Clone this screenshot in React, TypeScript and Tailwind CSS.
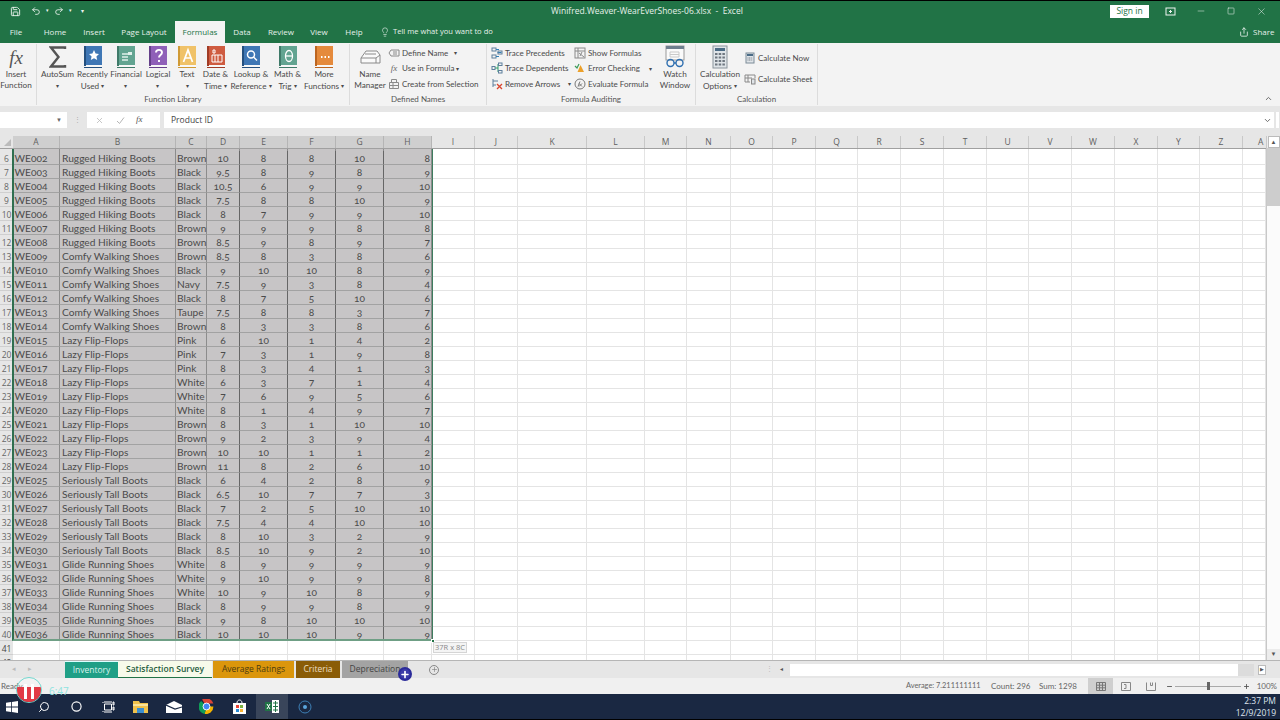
import type { ReactNode } from "react";
import { ChevronDown, ChevronUp, Circle, Lightbulb, Minus, Plus, Redo2, Save, Search, Share, Square, Undo2, X } from "lucide-react";

const cols = "grid grid-cols-[13px_47px_116px_31px_33px_48px_48px_48px_48px_43px_43px_69px_58px_42px_44px_42px_43px_42px_43px_43px_43px_42px_43px_43px_43px_42px_43px_23px]";
const letters = ["A", "B", "C", "D", "E", "F", "G", "H", "I", "J", "K", "L", "M", "N", "O", "P", "Q", "R", "S", "T", "U", "V", "W", "X", "Y", "Z", "A"];
const blanks = Array.from({ length: 19 }, (_, i) => i);

const P = "Rugged Hiking Boots";
const Q = "Comfy Walking Shoes";
const L = "Lazy Flip-Flops";
const S = "Seriously Tall Boots";
const G = "Glide Running Shoes";

const rows: [string, string, string, string, string, string, string, string][] = [
  ["WE002", P, "Brown", "10", "8", "8", "10", "8"],
  ["WE003", P, "Black", "9.5", "8", "9", "8", "9"],
  ["WE004", P, "Black", "10.5", "6", "9", "9", "10"],
  ["WE005", P, "Black", "7.5", "8", "8", "10", "9"],
  ["WE006", P, "Black", "8", "7", "9", "9", "10"],
  ["WE007", P, "Brown", "9", "9", "9", "8", "8"],
  ["WE008", P, "Brown", "8.5", "9", "8", "9", "7"],
  ["WE009", Q, "Brown", "8.5", "8", "3", "8", "6"],
  ["WE010", Q, "Black", "9", "10", "10", "8", "9"],
  ["WE011", Q, "Navy", "7.5", "9", "3", "8", "4"],
  ["WE012", Q, "Black", "8", "7", "5", "10", "6"],
  ["WE013", Q, "Taupe", "7.5", "8", "8", "3", "7"],
  ["WE014", Q, "Brown", "8", "3", "3", "8", "6"],
  ["WE015", L, "Pink", "6", "10", "1", "4", "2"],
  ["WE016", L, "Pink", "7", "3", "1", "9", "8"],
  ["WE017", L, "Pink", "8", "3", "4", "1", "3"],
  ["WE018", L, "White", "6", "3", "7", "1", "4"],
  ["WE019", L, "White", "7", "6", "9", "5", "6"],
  ["WE020", L, "White", "8", "1", "4", "9", "7"],
  ["WE021", L, "Brown", "8", "3", "1", "10", "10"],
  ["WE022", L, "Brown", "9", "2", "3", "9", "4"],
  ["WE023", L, "Brown", "10", "10", "1", "1", "2"],
  ["WE024", L, "Brown", "11", "8", "2", "6", "10"],
  ["WE025", S, "Black", "6", "4", "2", "8", "9"],
  ["WE026", S, "Black", "6.5", "10", "7", "7", "3"],
  ["WE027", S, "Black", "7", "2", "5", "10", "10"],
  ["WE028", S, "Black", "7.5", "4", "4", "10", "10"],
  ["WE029", S, "Black", "8", "10", "3", "2", "9"],
  ["WE030", S, "Black", "8.5", "10", "9", "2", "10"],
  ["WE031", G, "White", "8", "9", "9", "9", "9"],
  ["WE032", G, "White", "9", "10", "9", "9", "8"],
  ["WE033", G, "White", "10", "9", "10", "8", "9"],
  ["WE034", G, "Black", "8", "9", "9", "8", "9"],
  ["WE035", G, "Black", "9", "8", "10", "10", "10"],
  ["WE036", G, "Black", "10", "10", "10", "9", "9"],
];

const cell = "bg-[#c7c5c6] border-r border-b border-r-[#8c8c8c] border-b-[#a2a2a2] whitespace-nowrap";
const numCell = "bg-[#c7c5c6] border-r border-b border-r-[#666] border-b-[#a2a2a2] text-center oldstyle-nums";

function Book({ color, spine, children }: { color: string; spine: string; children?: ReactNode }) {
  return (
    <svg width="24" height="24" viewBox="0 0 24 24">
      <rect x="3" y="1" width="18" height="20" fill={color} />
      <rect x="3" y="1" width="2" height="20" fill={spine} />
      <rect x="5" y="20" width="16" height="2" fill="#f8f8f8" />
      <rect x="3" y="22" width="18" height="1" fill={spine} />
      {children}
    </svg>
  );
}

function Big({ w, icon, lines, caret }: { w: string; icon: ReactNode; lines: string[]; caret?: boolean }) {
  return (
    <div className={`${w} flex flex-col items-center`}>
      <div className="h-[26px] flex items-center justify-center">{icon}</div>
      <div className="text-[8.2px] leading-[11px] -mt-[1px] text-[#4a4a4a] whitespace-nowrap text-center font-['Lato',sans-serif]">
        {lines.map((t, i) => (
          <div key={i}>
            {t}
            {caret && i === lines.length - 1 && <span className="ml-[2px] text-[6px] align-[1px]">▾</span>}
          </div>
        ))}
        {lines.length === 1 && caret === undefined && <div className="text-[6px]">▾</div>}
      </div>
    </div>
  );
}

function Small({ icon, label, caret }: { icon: ReactNode; label: string; caret?: string }) {
  return (
    <div className="h-[15.5px] flex items-center gap-[2px] text-[8px] text-[#4a4a4a] whitespace-nowrap font-['Lato',sans-serif]">
      <span className="w-[12px] h-[12px] flex items-center justify-center shrink-0">{icon}</span>
      <span>{label}</span>
      {caret !== undefined && <span className={`${caret} text-[6px]`}>▾</span>}
    </div>
  );
}

function Group({ w, label, children, row, labelCls }: { w: string; label: string; children: ReactNode; row?: string; labelCls?: string }) {
  return (
    <div className={`${w} h-[61px] mt-[1px] flex flex-col border-r border-[#dcdcdc]`}>
      <div className={`h-[50px] flex ${row ?? ""}`}>{children}</div>
      <div className={`h-[11px] leading-[10px] text-[8px] text-center text-[#555] whitespace-nowrap font-['Lato',sans-serif] ${labelCls ?? ""}`}>{label}</div>
    </div>
  );
}

const mini = { width: 12, height: 12, viewBox: "0 0 12 12", fill: "none" };

function TitleTab({ w, children, active }: { w: string; children: ReactNode; active?: boolean }) {
  return (
    <div className={`${w} h-full flex items-center justify-center text-[8px] ${active ? "bg-[#f3f3f3] text-[#217346]" : "text-[#e6f0ea]"}`}>
      {children}
    </div>
  );
}

function SheetTab({ w, cls, children }: { w: string; cls: string; children: ReactNode }) {
  return <div className={`${w} h-[17px] flex items-center justify-center text-[8.5px] whitespace-nowrap ${cls}`}>{children}</div>;
}

function Task({ w = "w-[33px]", active, children }: { w?: string; active?: boolean; children: ReactNode }) {
  return <div className={`${w} h-full flex items-center justify-center ${active ? "bg-[#39455a]" : ""}`}>{children}</div>;
}

export default function App() {
  return (
    <div className="w-[1280px] h-[720px] overflow-hidden relative flex flex-col bg-[#e8e8e8] font-['Open_Sans',sans-serif] text-[#444]">
      {/* title bar */}
      <div className="h-[21px] shrink-0 bg-[#217346] border-t border-black flex items-center text-white">
        <div className="w-[551px] flex items-center pl-[10px] gap-[5px] text-[#eef5f0]">
          <Save size={11} strokeWidth={2} />
          <Undo2 size={10} className="ml-[5px]" />
          <span className="text-[5px]">▾</span>
          <Redo2 size={10} />
          <span className="text-[5px]">▾</span>
          <span className="text-[6px] ml-[4px]">▾</span>
        </div>
        <div className="w-[559px] text-[8.5px] text-[#e6f0ea] whitespace-nowrap">Winifred.Weaver-WearEverShoes-06.xlsx&nbsp; - &nbsp;Excel</div>
        <div className="w-[39px] h-[13px] bg-white text-[#217346] text-[8.5px] flex items-center justify-center">Sign in</div>
        <div className="flex-1 flex items-center text-[#f0f5f2]">
          <svg className="ml-[16px]" width="11" height="9" viewBox="0 0 11 9" fill="none" stroke="currentColor">
            <rect x="1" y="1" width="9" height="7" />
            <path d="M5.5 3v3M4 4.500h3" />
          </svg>
          <Minus className="ml-[20px]" size={10} strokeWidth={1.2} />
          <Square className="ml-[21px]" size={8} strokeWidth={1.6} />
          <X className="ml-[21px]" size={11} strokeWidth={1.1} />
        </div>
      </div>

      {/* ribbon tabs */}
      <div className="h-[22px] shrink-0 bg-[#217346] flex items-center">
        <TitleTab w="w-[32px]">File</TitleTab>
        <TitleTab w="w-[46px]">Home</TitleTab>
        <TitleTab w="w-[32px]">Insert</TitleTab>
        <TitleTab w="w-[65px] pl-[3px]">Page Layout</TitleTab>
        <TitleTab w="w-[50px]" active>Formulas</TitleTab>
        <TitleTab w="w-[34px]">Data</TitleTab>
        <TitleTab w="w-[44px]">Review</TitleTab>
        <TitleTab w="w-[32px]">View</TitleTab>
        <TitleTab w="w-[38px]">Help</TitleTab>
        <div className="flex items-center text-[7.6px] text-[#e6f0ea] whitespace-nowrap pl-[7px] gap-[3px] w-[866px]">
          <Lightbulb size={10} strokeWidth={1.5} />
          <span>Tell me what you want to do</span>
        </div>
        <div className="flex items-center gap-[4px] text-[8px] text-[#e6f0ea]">
          <Share size={10} />
          <span>Share</span>
        </div>
      </div>

      {/* ribbon */}
      <div className="h-[63px] shrink-0 bg-[#f3f3f3] flex relative">
        <Group w="w-[37px]" label="">
          <Big
            w="w-[32px]"
            lines={["Insert", "Function"]}
            caret={false}
            icon={<span className="font-['Liberation_Serif',serif] italic text-[19px] leading-none text-[#555]">fx</span>}
          />
        </Group>
        <Group w="w-[313px]" label="Function Library" row="pl-[3px]" labelCls="pr-[40px]">
          <Big
            w="w-[35px]"
            lines={["AutoSum"]}
            icon={
              <svg width="18" height="22" viewBox="0 0 18 22" fill="none" stroke="#555" strokeWidth="2.400">
                <path d="M16 3V1.500H2L9.500 11 2 20.500h14V19" />
              </svg>
            }
          />
          <Big w="w-[35px]" lines={["Recently", "Used"]} caret icon={<Book color="#3f77b5" spine="#24507f"><path d="M13 5l1.600 3.600 3.400.4-2.600 2.400.8 3.600-3.200-1.800-3.200 1.800.8-3.600L8 9l3.400-.4z" fill="#fff" /></Book>} />
          <Big w="w-[32px]" lines={["Financial"]} icon={<Book color="#62a491" spine="#3f7a69"><path d="M8 9h6M8 12h6M8 15h6" stroke="#dff0ea" strokeWidth="1.400" /><rect x="14" y="7" width="4" height="3" fill="#dff0ea" /></Book>} />
          <Big w="w-[32px]" lines={["Logical"]} icon={<Book color="#8f60b8" spine="#65408a"><path d="M10 7.500c0-3.500 6-3.500 6 0 0 2.500-3 2.500-3 5M13 15v2" stroke="#fff" strokeWidth="1.900" fill="none" /></Book>} />
          <Big w="w-[26px]" lines={["Text"]} icon={<Book color="#f0c268" spine="#d09a35"><path d="M8.500 17L13 5l4.500 12M10 13h6" stroke="#fff" strokeWidth="1.700" fill="none" /></Book>} />
          <Big w="w-[31px]" lines={["Date &", "Time"]} caret icon={<Book color="#cf5b40" spine="#a03c26"><path d="M9 5h2v3H9zM8 10h10v7H8z" fill="none" stroke="#fff" /><path d="M11 10v7M14 10v7" stroke="#fff" /></Book>} />
          <Big w="w-[40px]" lines={["Lookup &", "Reference"]} caret icon={<Book color="#3f77b5" spine="#24507f"><circle cx="12" cy="9.500" r="3.500" fill="none" stroke="#fff" strokeWidth="1.500" /><path d="M14.500 12l3.500 3.500" stroke="#fff" strokeWidth="1.500" /></Book>} />
          <Big w="w-[33px]" lines={["Math &", "Trig"]} caret icon={<Book color="#62a491" spine="#3f7a69"><ellipse cx="13" cy="11" rx="3.500" ry="5.500" fill="none" stroke="#fff" strokeWidth="1.300" /><path d="M9.500 11h7" stroke="#fff" strokeWidth="1.300" /></Book>} />
          <Big w="w-[40px]" lines={["More", "Functions"]} caret icon={<Book color="#e58a3c" spine="#bc6520"><path d="M9 12h1.500M12.500 12H14M16 12h1.500" stroke="#fff" strokeWidth="1.800" /></Book>} />
        </Group>
        <Group w="w-[137px]" label="Defined Names" row="pl-[2px]">
          <Big
            w="w-[36px]"
            lines={["Name", "Manager"]}
            caret={false}
            icon={
              <svg width="24" height="22" viewBox="0 0 24 22" fill="none" stroke="#8a8a8a">
                <path d="M3 12l5-7h11l3 4v8H3z" fill="#fafafa" />
                <path d="M3 12h15l4-3M18 12v5" />
                <path d="M7 8h11" />
              </svg>
            }
          />
          <div className="flex flex-col pt-[1px]">
            <Small
              icon={<svg {...mini} stroke="#8a8a8a"><path d="M3 3h8v6H3L1 6z" /><path d="M5 5h4M5 7h4" /></svg>}
              label="Define Name"
              caret="ml-[4px]"
            />
            <Small
              icon={<span className="font-['Liberation_Serif',serif] italic text-[9px] leading-none text-[#666]">fx</span>}
              label="Use in Formula"
              caret=""
            />
            <Small
              icon={<svg {...mini} stroke="#8a8a8a"><path d="M1.500 4.500h9v6h-9zM1.500 7.500h9M5 4.500v6M3.500 4.500V1.500h5v3" /></svg>}
              label="Create from Selection"
            />
          </div>
        </Group>
        <Group w="w-[209px]" label="Formula Auditing" row="pl-[4px]">
          <div className="w-[83px] flex flex-col pt-[1px]">
            <Small
              icon={<svg {...mini} stroke="#5d7f9c"><rect x="1" y="1" width="4" height="3" /><rect x="1" y="8" width="4" height="3" /><path d="M5 2.500h3M5 9.500h3M6.500 5.500h4" stroke="#2f7fb7" /><rect x="7" y="4" width="4" height="3" /></svg>}
              label="Trace Precedents"
            />
            <Small
              icon={<svg {...mini} stroke="#5d7f9c"><rect x="1" y="4.500" width="3" height="3" /><path d="M4 6h3M7 2v8" stroke="#2f9c6b" /><rect x="7.500" y="1" width="3.500" height="2.500" /><rect x="7.500" y="8.500" width="3.500" height="2.500" /></svg>}
              label="Trace Dependents"
            />
            <Small
              icon={<svg {...mini} stroke="#5d7f9c"><path d="M2 1v8M2 3h5M2 7h3" /><path d="M6 6l5 5M11 6l-5 5" stroke="#d9452f" strokeWidth="1.300" /></svg>}
              label="Remove Arrows"
              caret="ml-[6px]"
            />
          </div>
          <div className="w-[81px] flex flex-col pt-[1px]">
            <Small
              icon={<svg {...mini} stroke="#8a8a8a"><rect x="1" y="1" width="10" height="10" /><path d="M1 4h10M4 1v10M5 6l5 4M6 9l2-4" /></svg>}
              label="Show Formulas"
            />
            <Small
              icon={<svg {...mini}><path d="M1 4l2 2 2-4" stroke="#3c9b5a" strokeWidth="1.200" /><path d="M6.500 3l3.500 7H3.500z" fill="#eca02a" /></svg>}
              label="Error Checking"
              caret="ml-[7px]"
            />
            <Small
              icon={<svg {...mini} stroke="#777"><circle cx="6" cy="6" r="5" /><path d="M4 8.500L6 3.500M5 8.500l3-3M5 5.500l3 3" /></svg>}
              label="Evaluate Formula"
            />
          </div>
          <Big
            w="w-[40px]"
            lines={["Watch", "Window"]}
            caret={false}
            icon={
              <svg width="22" height="24" viewBox="0 0 22 24" fill="none">
                <rect x="2" y="1" width="18" height="14" fill="#fafafa" stroke="#9a9a9a" />
                <rect x="2" y="1" width="18" height="3" fill="#6f7f8f" />
                <path d="M6 7h9v5H6zM6 9.500h9" stroke="#c9c9c9" />
                <circle cx="6.500" cy="18" r="3.500" stroke="#2f6fb0" strokeWidth="1.400" />
                <circle cx="15.500" cy="18" r="3.500" stroke="#2f6fb0" strokeWidth="1.400" />
                <path d="M10 18h2" stroke="#2f6fb0" strokeWidth="1.400" />
              </svg>
            }
          />
        </Group>
        <Group w="w-[122px]" label="Calculation" row="pl-[1px]">
          <Big
            w="w-[46px]"
            lines={["Calculation", "Options"]}
            caret
            icon={
              <svg width="18" height="24" viewBox="0 0 18 24">
                <rect x="2" y="1" width="14" height="22" fill="#dfe4e8" stroke="#8a949c" />
                <rect x="4" y="3" width="10" height="3" fill="#4b6b85" />
                <path d="M4 9h10M4 12.500h10M4 16h10M4 19.500h10" stroke="#6f7780" strokeWidth="2" strokeDasharray="2.500 1.200" />
              </svg>
            }
          />
          <div className="flex flex-col pt-[6.500px] gap-[5.500px] pl-[1px]">
            <Small
              icon={<svg {...mini}><rect x="2" y="1" width="8" height="10" fill="#dfe4e8" stroke="#7d8c98" /><rect x="3" y="2" width="6" height="2" fill="#4b6b85" /><path d="M3.500 6h5M3.500 8h5" stroke="#6f7780" strokeDasharray="1 .6" /></svg>}
              label="Calculate Now"
            />
            <Small
              icon={<svg {...mini} stroke="#8a8a8a"><path d="M1 2h10v3M1 2v7h5M1 5h7M4 2v7" /><rect x="7.500" y="6" width="3.500" height="5" fill="#dfe4e8" /></svg>}
              label="Calculate Sheet"
            />
          </div>
        </Group>
        <div className="flex-1 flex justify-end items-end pb-[3px] pr-[7px]">
          <ChevronUp size={9} strokeWidth={2.500} className="text-[#666]" />
        </div>
      </div>

      {/* formula bar */}
      <div className="h-[30px] shrink-0 bg-[#e6e6e6] pt-[6px] pb-[8px] flex">
        <div className="w-[67px] bg-white flex items-center justify-end pr-[5px]">
          <span className="text-[6px] text-[#666]">▼</span>
        </div>
        <div className="w-[20px] flex items-center justify-center text-[7px] text-[#aaa]">⋮</div>
        <div className="w-[73px] bg-white flex items-center text-[#b5b5b5]">
          <X size={9} className="ml-[8px]" />
          <svg className="ml-[12px]" width="9" height="9" viewBox="0 0 9 9" fill="none" stroke="currentColor"><path d="M1 5l2.500 2.500L8 1.500" /></svg>
          <span className="ml-[11px] font-['Liberation_Serif',serif] italic text-[9px] text-[#555]">fx</span>
        </div>
        <div className="w-[4px]" />
        <div className="w-[1110px] bg-white flex items-center pl-[7px] pr-[2px] text-[8.500px] justify-between">
          <span className="mt-[1px]">Product ID</span>
          <ChevronDown size={9} strokeWidth={2.500} className="text-[#666]" />
        </div>
        <div className="w-[2px]" />
        <div className="w-[3px] bg-white" />
      </div>

      {/* sheet */}
      <div className="h-[524px] shrink-0 flex overflow-hidden">
        <div className="w-[1266px] relative font-['Lato',sans-serif] bg-white">
          <div className={`${cols} h-[13px] bg-[#e6e6e6] border-b border-[#a0a0a0] text-[8.500px] leading-[12px] font-['Open_Sans',sans-serif] text-[#5f5f5f] text-center`}>
            <div className="flex items-end justify-end pr-[2px] pb-[2px]">
              <div className="w-0 h-0 border-l-[7px] border-l-transparent border-b-[7px] border-b-[#bbb]" />
            </div>
            {letters.map((l, i) => (
              <div key={i} className={`${i < 8 ? "bg-[#cfcfcf] border-r border-[#b5b5b5]" : i < 26 ? "border-r border-[#c8c8c8]" : "text-left pl-[15px]"} overflow-hidden`}>
                {l}
              </div>
            ))}
          </div>
          <div className={`${cols} h-[2px] overflow-hidden`}>
            <div className="bg-[#e6e6e6]" />
            {letters.map((_, i) => (
              <div key={i} className={i < 8 ? "bg-[#c7c5c6] border-r border-[#8c8c8c]" : "border-r border-[#e2e2e2]"} />
            ))}
          </div>
          {rows.map((r, n) => (
            <div key={r[0]} className={`${cols} [&>div]:h-[14px] text-[10.2px] leading-[15px] text-[#4b4b4b]`}>
              <div className="bg-[#e6e6e6] text-[8.500px] text-[#666] text-center font-['Open_Sans',sans-serif] border-b border-[#cfcfcf] whitespace-nowrap">{n + 6}</div>
              <div className={`${cell} pl-[1.500px] oldstyle-nums`}>{r[0]}</div>
              <div className={`${cell} pl-[2px]`}>{r[1]}</div>
              <div className={`${cell} pl-[1px]`}>{r[2]}</div>
              <div className={numCell}>{r[3]}</div>
              <div className={numCell}>{r[4]}</div>
              <div className={numCell}>{r[5]}</div>
              <div className={numCell}>{r[6]}</div>
              <div className={`${cell} text-right pr-[1px] oldstyle-nums`}>{r[7]}</div>
              {blanks.map((b) => (
                <div key={b} className="border-r border-b border-[#e4e4e4]" />
              ))}
            </div>
          ))}
          {[41, 42].map((n) => (
            <div key={n} className={`${cols} [&>div]:h-[14px]`}>
              <div className="bg-[#e6e6e6] text-[8.500px] leading-[15px] text-[#444] text-center font-['Open_Sans',sans-serif] border-b border-[#cfcfcf]">{n}</div>
              {letters.map((l, i) => (
                <div key={i} className="border-r border-b border-[#e4e4e4]" />
              ))}
            </div>
          ))}
          {/* selection outline */}
          <div className="absolute left-[12px] top-[13px] w-[421px] h-[492px] border-l-2 border-l-[#2f6f50] border-r border-r-[#3f7d5f] border-b-2 border-b-[#6f9f85] pointer-events-none" />
          <div className="absolute left-[431px] top-[503px] w-[4px] h-[4px] bg-[#217346] border border-white" />
          <div className="absolute left-[433px] top-[506px] h-[11px] px-[1px] bg-[#f4f4f4] border border-[#d5d5d5] text-[7.500px] leading-[9px] text-[#888] font-['Open_Sans',sans-serif] whitespace-nowrap">37R x 8C</div>
        </div>
        <div className="w-[14px] bg-[#ececec] flex flex-col items-center border-l border-[#c8c8c8]">
          <div className="w-[12px] h-[12px] bg-white border border-[#bbb] flex items-center justify-center text-[6px] text-[#555]">▲</div>
          <div className="w-full h-[58px] bg-[#cdcdcd]" />
          <div className="w-full flex-1 bg-[#fbfbfb]" />
          <div className="w-[12px] h-[11px] flex items-center justify-center text-[6px] text-[#555]">▼</div>
        </div>
      </div>

      {/* sheet tabs */}
      <div className="h-[18px] shrink-0 bg-[#e6e6e6] border-t border-[#b5b5b5] flex items-center">
        <div className="w-[65px] flex items-center pl-[12px] gap-[12px] text-[7px] text-[#bbb]">
          <span>◂</span>
          <span>▸</span>
        </div>
        <SheetTab w="w-[53px]" cls="bg-[#1f9f86] text-[#d9f2ec] border-t border-[#dff]">Inventory</SheetTab>
        <SheetTab w="w-[94px]" cls="bg-[#f7faea] text-[#1f5c3d] font-semibold border-b border-[#217346]">Satisfaction Survey</SheetTab>
        <div className="w-[1px]" />
        <SheetTab w="w-[81px]" cls="bg-[#db960c] text-[#4c3b10]">Average Ratings</SheetTab>
        <div className="w-[2px]" />
        <SheetTab w="w-[44px]" cls="bg-[#8a5c07] text-[#ecdfc4]">Criteria</SheetTab>
        <div className="w-[2px]" />
        <SheetTab w="w-[66px]" cls="bg-[#a3a3a3] text-[#444]">Depreciation</SheetTab>
        <div className="w-[21px]" />
        <div className="w-[10px] h-[10px] rounded-full border border-[#888] flex items-center justify-center text-[#777]">
          <Plus size={7} />
        </div>
        <div className="w-[327px]" />
        <div className="text-[7px] text-[#bbb] w-[14px]">⋮</div>
        <div className="text-[6px] text-[#555] w-[10px]">◂</div>
        <div className="w-[464px] h-[12px] bg-white flex justify-end">
          <div className="w-[16px] h-full bg-[#dcdcdc]" />
        </div>
        <div className="w-[8px] h-[10px] ml-[4px] bg-white border border-[#bbb] flex items-center justify-center text-[5px] text-[#555]">▶</div>
      </div>

      {/* status bar */}
      <div className="h-[16px] shrink-0 bg-[#f0f0f0] flex items-center text-[8px] text-[#666] whitespace-nowrap font-['Lato',sans-serif]">
        <div className="w-[906px] pl-[1px]">Ready</div>
        <div className="w-[85px] text-[7.400px]">Average: 7.211111111</div>
        <div className="w-[48px]">Count: 296</div>
        <div className="w-[49px]">Sum: 1298</div>
        <div className="w-[25px] h-full bg-[#cfcfcf] flex items-center justify-center">
          <svg width="10" height="9" viewBox="0 0 10 9" fill="none" stroke="#777"><path d="M.5.5h9v8h-9zM.5 3.200h9M.5 5.800h9M3.500.5v8M6.500.5v8" /></svg>
        </div>
        <div className="w-[25px] flex justify-center">
          <svg width="10" height="9" viewBox="0 0 10 9" fill="none" stroke="#888"><path d="M.5.500h9v8h-9zM3 2.500h2v4H3" /></svg>
        </div>
        <div className="w-[26px] flex justify-center">
          <svg width="10" height="9" viewBox="0 0 10 9" fill="none" stroke="#888"><path d="M.5.500v8h9v-8M4.500.5v3h2v-3" /></svg>
        </div>
        <Minus size={7} strokeWidth={3} className="ml-[2px] text-[#555]" />
        <div className="w-[66px] h-[1px] bg-[#aaa] ml-[2px] flex justify-center items-center">
          <div className="w-[3px] h-[8px] bg-[#666]" />
        </div>
        <Plus size={7} strokeWidth={3} className="ml-[2px] text-[#555]" />
        <div className="ml-auto pr-[3px]">100%</div>
      </div>

      {/* taskbar */}
      <div className="h-[25px] shrink-0 bg-[#1a2842] flex items-center">
        <Task w="w-[28px] pr-[4px]">
          <svg width="12" height="12" viewBox="0 0 12 12" fill="#fff"><path d="M0 1.800L5 1v4.600H0zM5.800.9L12 0v5.600H5.800zM0 6.400h5V11L0 10.200zM5.800 6.400H12V12l-6.200-.9z" /></svg>
        </Task>
        <Task w="w-[32px]"><Search size={12} className="text-white -scale-x-100" /></Task>
        <Task w="w-[32px]"><Circle size={11} strokeWidth={2.500} className="text-white" /></Task>
        <Task w="w-[32px]">
          <svg width="13" height="12" viewBox="0 0 13 12" fill="none" stroke="#fff"><path d="M2.500 3h7v6h-7zM1 1v1M1 10v1M11 1h1v3h-1zM11 6h1v3h-1zM2 1h8M2 11h8" /></svg>
        </Task>
        <Task>
          <svg width="15" height="13" viewBox="0 0 15 13"><path d="M0 1h6l1 2h8v10H0z" fill="#f0c14b" /><rect x="0" y="4" width="15" height="2" fill="#fbe39a" /><rect x="4" y="8" width="7" height="5" fill="#3c8fd1" /></svg>
        </Task>
        <Task>
          <svg width="16" height="12" viewBox="0 0 16 12"><path d="M0 4l8-4 8 4v8H0z" fill="#fff" /><path d="M0 4l9 4 7-2" fill="none" stroke="#1a2842" strokeWidth="1.200" /></svg>
        </Task>
        <Task>
          <svg width="15" height="15" viewBox="0 0 24 24">
            <path d="M12 12L5 0.800A12 12 0 0 1 23 7H12z" fill="#dc4437" />
            <path d="M12 12H23A12 12 0 0 1 9 24z" fill="#f4b400" />
            <path d="M12 12L9 24A12 12 0 0 1 3.500 3z" fill="#0f9d58" />
            <circle cx="12" cy="12" r="5.500" fill="#4285f4" stroke="#fff" strokeWidth="1.500" />
          </svg>
        </Task>
        <Task>
          <svg width="15" height="15" viewBox="0 0 15 15"><path d="M1 4h13v11H1z" fill="#fff" /><path d="M5 4c0-4 5-4 5 0" fill="none" stroke="#fff" /><rect x="4" y="6" width="3" height="3" fill="#ea4335" /><rect x="8" y="6" width="3" height="3" fill="#7cb342" /><rect x="4" y="10" width="3" height="3" fill="#2a8bd6" /><rect x="8" y="10" width="3" height="3" fill="#f9b233" /></svg>
        </Task>
        <Task w="w-[32px]" active>
          <svg width="14" height="13" viewBox="0 0 14 13"><rect x="7" y="0" width="7" height="13" fill="#fff" /><path d="M8 3h5M8 6.500h5M8 10h5M10.500 1v11" stroke="#217346" /><rect x="0" y="2" width="7" height="9" fill="#217346" /><path d="M2 4l3 5M5 4L2 9" stroke="#fff" /></svg>
        </Task>
        <Task>
          <svg width="14" height="14" viewBox="0 0 14 14" fill="none"><circle cx="7" cy="7" r="6" stroke="#3d7fb5" /><circle cx="7" cy="7" r="2" fill="#5aa5dd" /></svg>
        </Task>
        <div className="ml-auto pr-[4px] text-right text-[8.500px] leading-[12px] text-[#dfe5ee]">
          <div>2:37 PM</div>
          <div>12/9/2019</div>
        </div>
      </div>
      <div className="h-[1px] shrink-0 bg-black" />

      {/* recorder overlay */}
      <div className="absolute left-[16px] top-[677px] w-[26px] h-[26px] rounded-full border border-[#6fd8cf] overflow-hidden flex flex-col">
        <div className="h-[9px] bg-white/20" />
        <div className="flex-1 bg-[#e23a45]" />
      </div>
      <div className="absolute left-[24px] top-[684px] w-[3px] h-[15px] bg-white" />
      <div className="absolute left-[31px] top-[684px] w-[3px] h-[15px] bg-white" />
      <div className="absolute left-[49px] top-[684px] h-[14px] text-[10px] leading-[14px] text-[#8fe3e0]">6:47</div>

      {/* cursor */}
      <div className="absolute left-[398px] top-[667px] w-[14px] h-[14px] rounded-full bg-[#3b3ba8] flex items-center justify-center border-2 border-[#2b2b9a]">
        <Plus size={11} strokeWidth={4} className="text-white" />
      </div>
    </div>
  );
}
